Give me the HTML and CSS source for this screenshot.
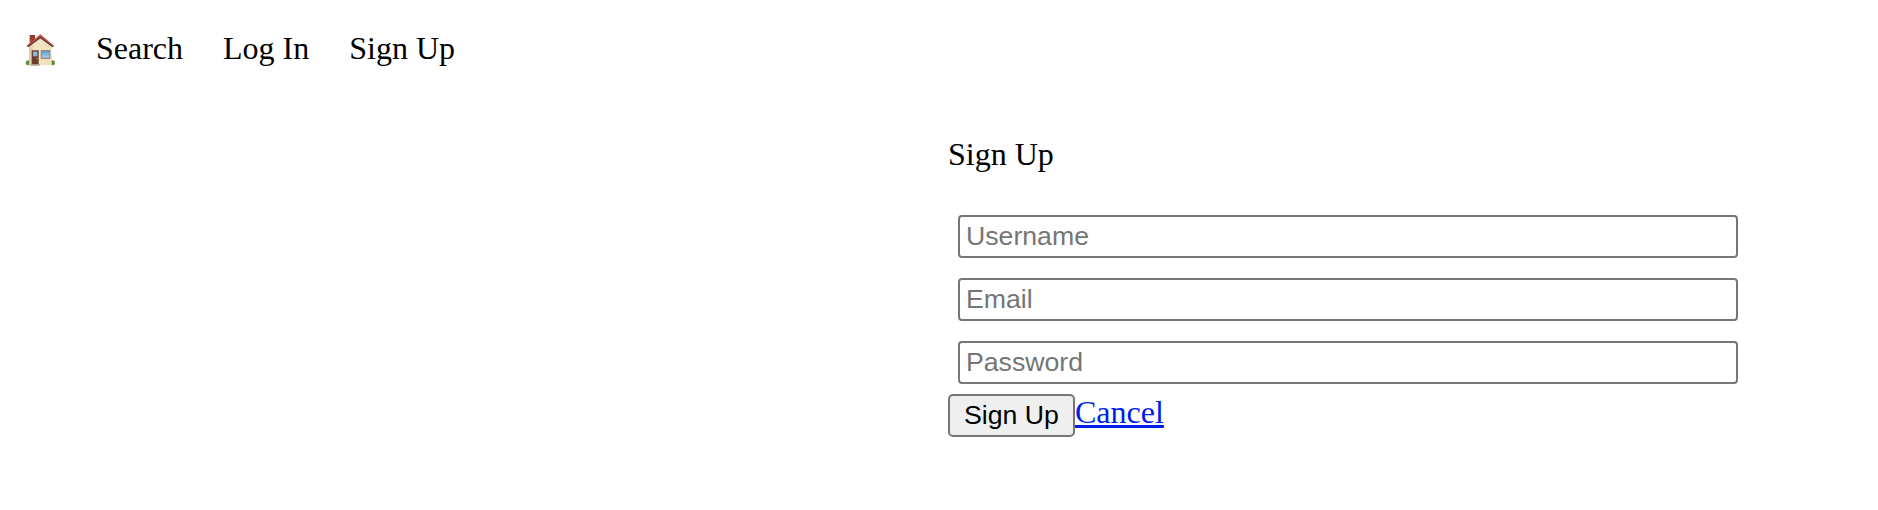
FILE: index.html
```html
<!DOCTYPE html>
<html lang="en">
<head>
<meta charset="utf-8">
<title>Sign Up</title>
<link rel="stylesheet" href="styles.css">
</head>
<body>
<nav class="nav">
  <a class="nav-home" href="#" aria-label="Home">
    <svg class="house" viewBox="0 0 120 120">
      <defs>
        <linearGradient id="wall" x1="0" y1="0" x2="1" y2="0"><stop offset="0" stop-color="#dcc8a0"/><stop offset=".25" stop-color="#f6e6c4"/><stop offset="1" stop-color="#efdfbd"/></linearGradient>
        <linearGradient id="glass" x1="0" y1="0" x2="0" y2="1"><stop offset="0" stop-color="#5b9bd0"/><stop offset="1" stop-color="#a3cff0"/></linearGradient>
        <linearGradient id="brick" x1="0" y1="0" x2="0" y2="1"><stop offset="0" stop-color="#88372c"/><stop offset="1" stop-color="#b14a3b"/></linearGradient>
      </defs>
      <ellipse cx="37" cy="98" rx="8" ry="7.5" fill="#5f8b3d"/>
      <ellipse cx="109" cy="98" rx="8" ry="7.5" fill="#5f8b3d"/>
      <path d="M39 47L73 22L107 47V106H39Z" fill="url(#wall)"/>
      <path d="M41 15H57V29L41 43Z" fill="url(#brick)"/>
      <path d="M35 50L73 22L111 50" fill="none" stroke="#4a3a38" stroke-width="5"/>
      <path d="M32 47L73 13L114 47V51L73 20L32 51Z" fill="#c44b3e"/>
      <path d="M46 60H69V104H46Z" fill="#a3876b"/>
      <path d="M48 62H67V103H48Z" fill="#6e3c2c"/>
      <path d="M51 65H64V79H51Z" fill="#83b9e3"/>
      <circle cx="64" cy="86" r="2" fill="#d7b65a"/>
      <path d="M74 60H103V87H74Z" fill="#9c8674"/>
      <path d="M77 63H100V83H77Z" fill="url(#glass)"/>
      <path d="M43 103H72V107H43Z" fill="#aaa29a"/>
    </svg>
  </a>
  <a href="#">Search</a>
  <a href="#">Log In</a>
  <a href="#">Sign Up</a>
</nav>
<main class="signup">
  <div class="title">Sign Up</div>
  <form class="form">
    <input class="field" type="text" placeholder="Username">
    <input class="field" type="email" placeholder="Email">
    <input class="field" type="password" placeholder="Password">
    <div class="actions">
      <button class="submit" type="button">Sign Up</button>
      <a class="cancel" href="#">Cancel</a>
    </div>
  </form>
</main>
</body>
</html>
```
FILE: styles.css
```css
* {
  box-sizing: border-box;
}

body {
  margin: 0;
  background: #fff;
  color: #000;
  font: 32px/37px "Liberation Serif", "Times New Roman", serif;
}

.nav {
  display: flex;
  gap: 40px;
  padding: 30px 16px 0;
}

.nav a {
  color: inherit;
  text-decoration: none;
}

.nav .nav-home {
  display: flex;
  width: 40px;
  height: 37px;
}

.house {
  width: 40px;
  height: 40px;
}

.signup {
  width: 800px;
  margin: 69px 0 0 948px;
}

.form {
  display: flex;
  flex-direction: column;
  gap: 20px;
  padding-top: 42px;
}

.field {
  height: 43px;
  margin: 0 10px;
  padding: 2px 6px;
  border: 2px solid #767676;
  border-radius: 4px;
  background: #fff;
  font: 26.667px "Liberation Sans", Arial, sans-serif;
}

.field::placeholder {
  color: #757575;
}

.actions {
  display: flex;
  margin-top: -10px;
}

.submit {
  width: 127px;
  height: 43px;
  padding: 0;
  border: 2px solid #767676;
  border-radius: 5px;
  background: #efefef;
  color: #000;
  font: 26.667px "Liberation Sans", Arial, sans-serif;
}

.cancel {
  color: #001ee9;
  text-decoration-thickness: 3px;
}
```
